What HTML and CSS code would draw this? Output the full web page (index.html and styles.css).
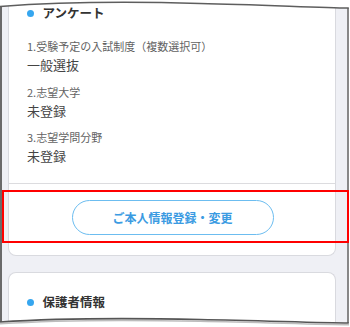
FILE: index.html
```html
<!DOCTYPE html>
<html lang="ja">
<head>
<meta charset="utf-8">
<link rel="stylesheet" href="styles.css">
</head>
<body>
<div class="frame">
  <div class="screen">
    <div class="card card-survey">
      <div class="sec-head"><span class="dot"></span><span class="sec-title">アンケート</span></div>
      <div class="items">
        <div class="item">
          <div class="label">1.受験予定の入試制度（複数選択可）</div>
          <div class="value">一般選抜</div>
        </div>
        <div class="item">
          <div class="label">2.志望大学</div>
          <div class="value">未登録</div>
        </div>
        <div class="item">
          <div class="label">3.志望学問分野</div>
          <div class="value">未登録</div>
        </div>
      </div>
      <div class="actions">
        <button class="btn" type="button">ご本人情報登録・変更</button>
      </div>
    </div>
    <div class="card card-parent">
      <div class="sec-head sec-head-parent"><span class="dot"></span><span class="sec-title">保護者情報</span></div>
    </div>
  </div>
  <svg class="edges" width="350" height="327" viewBox="0 0 350 327" xmlns="http://www.w3.org/2000/svg">
    <path d="M0,0 H350 V8 C320,8 260,4.5 200,3.5 C130,1.5 60,2 0,6.5 Z" fill="#ffffff"/>
    <path d="M0,322 C60,318 130,318 200,319.5 C260,320.5 320,323 350,323 V327 H0 Z" fill="#ffffff"/>
    <path d="M0,323.8 C60,319.8 130,319.8 200,321.3 C260,322.3 320,324.8 349,324.8" fill="none" stroke="#bdbdbd" stroke-width="1.5"/>
    <line x1="1" y1="6" x2="1" y2="322" stroke="#6a6a6a" stroke-width="2"/>
    <line x1="348" y1="8" x2="348" y2="323" stroke="#6a6a6a" stroke-width="1.6"/>
    <path d="M0,6.5 C60,2 130,1.5 200,3.5 C260,4.5 320,8 348.8,8" fill="none" stroke="#5e5e5e" stroke-width="1.5"/>
    <path d="M0,322 C60,318 130,318 200,319.5 C260,320.5 320,323 348.8,323" fill="none" stroke="#555555" stroke-width="1.6"/>
  </svg>
  <div class="highlight"></div>
</div>
</body>
</html>
```

FILE: styles.css
```css
html, body {
  margin: 0;
  padding: 0;
  background: #ffffff;
}

body {
  font-family: "Noto Sans CJK JP", "Noto Sans", sans-serif;
  width: 350px;
  height: 327px;
  overflow: hidden;
}

.frame {
  position: relative;
  width: 350px;
  height: 327px;
  overflow: hidden;
  background: #ffffff;
}

.screen {
  margin-left: 2px;
  width: 345px;
  height: 327px;
  background: #eff0f5;
  padding-left: 6px;
  box-sizing: border-box;
}

.card {
  width: 328px;
  box-sizing: border-box;
  background: #ffffff;
  border: 1px solid #d9dadf;
}

.card-survey {
  border-top: none;
  border-radius: 0 0 8px 8px;
}

.card-parent {
  margin-top: 16px;
  height: 80px;
  border-bottom: none;
  border-radius: 8px 8px 0 0;
}

.sec-head {
  display: flex;
  align-items: center;
  height: 26px;
  padding-left: 18px;
}

.sec-head-parent {
  height: 20px;
  padding-top: 19.5px;
}

.dot {
  width: 7px;
  height: 7px;
  border-radius: 50%;
  background: #36a6ef;
  margin-right: 8.5px;
  flex: none;
}

.sec-title {
  font-size: 12.5px;
  font-weight: 700;
  color: #333333;
  line-height: 20px;
}

.items {
  padding: 12px 0 16.5px 18px;
}

.item + .item {
  margin-top: 8.5px;
}

.label {
  font-size: 11px;
  line-height: 16px;
  color: #626262;
}

.value {
  margin-top: 1px;
  font-size: 13px;
  line-height: 20px;
  color: #444444;
}

.actions {
  border-top: 1px solid #dcdcdf;
  padding: 16px 0 20px;
  display: flex;
  justify-content: center;
}

.btn {
  width: 202px;
  height: 35px;
  border: 1px solid #6cbdf0;
  border-radius: 18px;
  background: #ffffff;
  color: #3b9be2;
  font-family: "Noto Sans CJK JP", "Noto Sans", sans-serif;
  font-size: 12px;
  font-weight: 700;
  padding: 0;
  margin-left: 1px;
}

.edges {
  position: absolute;
  left: 0;
  top: 0;
}

.highlight {
  position: absolute;
  left: 2px;
  top: 190px;
  width: 347px;
  height: 53px;
  border: 2px solid #ff0000;
  box-sizing: border-box;
}
```
